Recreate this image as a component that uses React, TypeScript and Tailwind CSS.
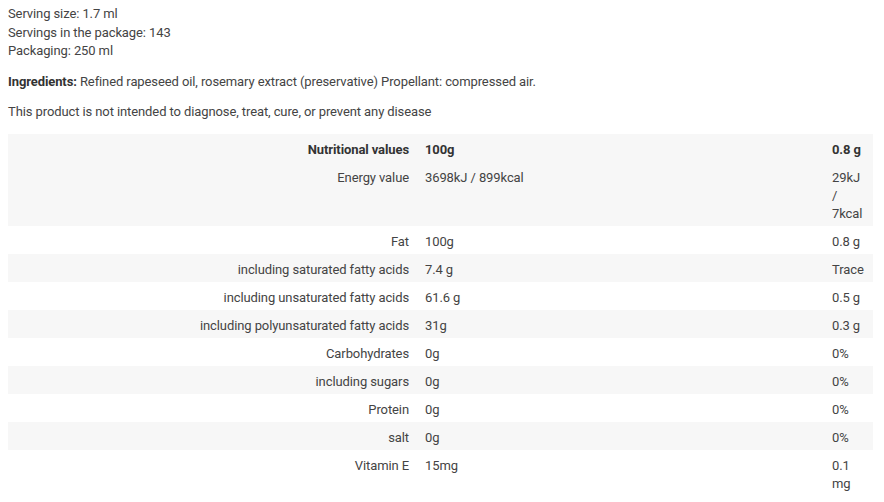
import React from 'react';

type Row = { label: string; per100: string; perServing: string };

const rows: Row[] = [
  { label: 'Energy value', per100: '3698kJ / 899kcal', perServing: '29kJ / 7kcal' },
  { label: 'Fat', per100: '100g', perServing: '0.8 g' },
  { label: 'including saturated fatty acids', per100: '7.4 g', perServing: 'Trace' },
  { label: 'including unsaturated fatty acids', per100: '61.6 g', perServing: '0.5 g' },
  { label: 'including polyunsaturated fatty acids', per100: '31g', perServing: '0.3 g' },
  { label: 'Carbohydrates', per100: '0g', perServing: '0%' },
  { label: 'including sugars', per100: '0g', perServing: '0%' },
  { label: 'Protein', per100: '0g', perServing: '0%' },
  { label: 'salt', per100: '0g', perServing: '0%' },
  { label: 'Vitamin E', per100: '15mg', perServing: '0.1 mg' },
];

const App: React.FC = () => {
  return (
    <div
      className="min-h-screen bg-white text-[13px] leading-[18px] tracking-[-0.1px] text-[#444]"
      style={{ fontFamily: 'Roboto, "Liberation Sans", sans-serif' }}
    >
      <div className="px-2 pt-[5px]">
        <div className="mb-[12px] leading-[18.5px]">
          <div>Serving size: 1.7 ml</div>
          <div>Servings in the package: 143</div>
          <div>Packaging: 250 ml</div>
        </div>

        <p className="mb-[12.5px]">
          <strong className="font-bold text-[#333]">Ingredients:</strong> Refined rapeseed oil, rosemary
          extract (preservative) Propellant: compressed air.
        </p>

        <p className="mb-[13px]">This product is not intended to diagnose, treat, cure, or prevent any disease</p>

        <div className="w-[865px]">
          <div className="grid grid-cols-[409px_407px_49px] bg-[#f7f7f7] font-bold text-[#333]">
            <div className="pt-[7px] pb-[3px] pr-2 text-right">Nutritional values</div>
            <div className="pt-[7px] pb-[3px] pl-2">100g</div>
            <div className="pt-[7px] pb-[3px] px-2">0.8 g</div>
          </div>
          {rows.map((row, i) => (
            <div
              key={row.label}
              className={`grid grid-cols-[409px_407px_49px] ${i % 2 === 0 ? 'bg-[#f7f7f7]' : 'bg-white'}`}
            >
              <div className="pt-[7px] pb-[3px] pr-2 text-right">{row.label}</div>
              <div className="pt-[7px] pb-[3px] pl-2">{row.per100}</div>
              <div className="pt-[7px] pb-[3px] px-2 break-words">{row.perServing}</div>
            </div>
          ))}
        </div>
      </div>
    </div>
  );
};

export default App;
